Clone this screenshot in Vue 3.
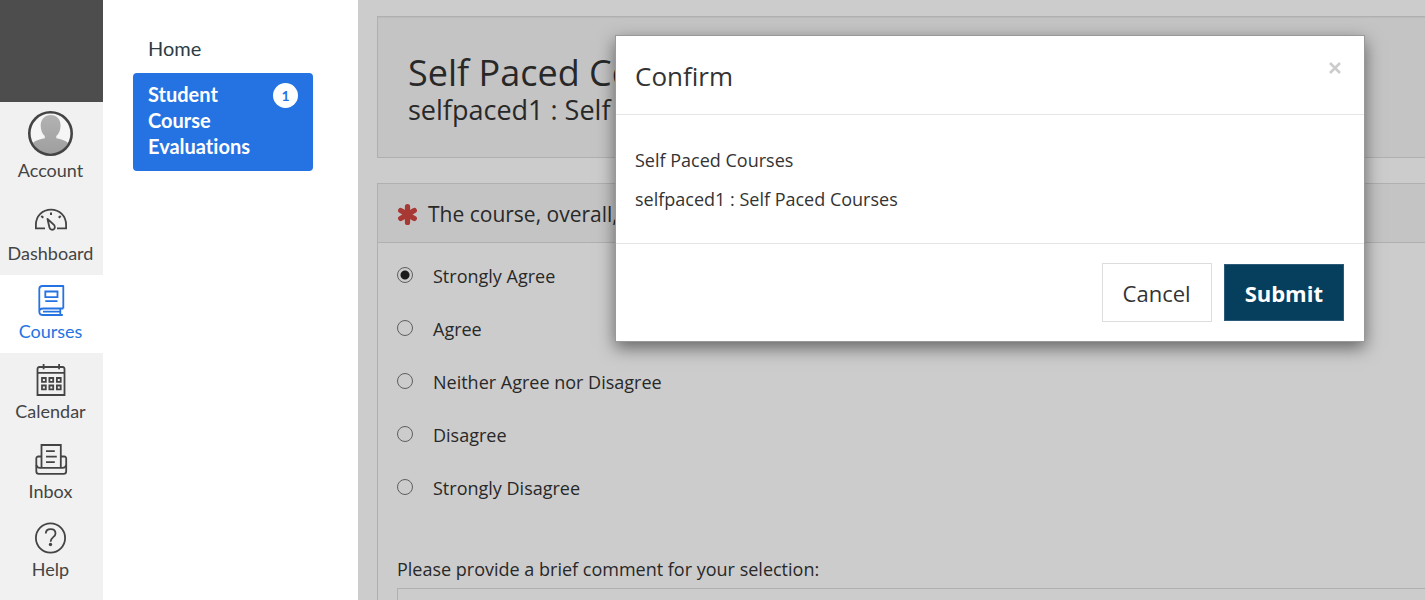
<script setup>
import { ref } from 'vue'

const answers = [
  'Strongly Agree',
  'Agree',
  'Neither Agree nor Disagree',
  'Disagree',
  'Strongly Disagree',
]
const selected = ref('Strongly Agree')
const comment = ref('')
</script>

<template>
  <div class="page">
    <nav class="global-nav" aria-label="Global navigation">
      <div class="brand"></div>
      <a class="nav-item" href="#account">
        <svg class="icon-account" viewBox="0 0 45 45" aria-hidden="true">
          <defs>
            <clipPath id="avatar-clip"><circle cx="22.5" cy="22.5" r="20" /></clipPath>
            <linearGradient id="avatar-shade" x1="0" y1="0" x2="0" y2="1">
              <stop offset="0" stop-color="#b2b2b2" />
              <stop offset="1" stop-color="#9e9e9e" />
            </linearGradient>
          </defs>
          <circle cx="22.5" cy="22.5" r="21" fill="#f5f5f5" />
          <g clip-path="url(#avatar-clip)" fill="url(#avatar-shade)">
            <path d="M22.8 4c6 0 9.800 4.300 9.800 10.500 0 4.500-1.800 8.500-4.300 10.500v2.200c2.700.8 9 1.200 12.700 5.800V45H4V33c3.700-4.600 10-5 12.800-5.800V25c-2.500-2-4.100-6-4.100-10.500C12.700 8.300 16.800 4 22.800 4z" />
          </g>
          <circle cx="22.500" cy="22.500" r="21.200" fill="none" stroke="#444" stroke-width="2.600" />
        </svg>
        <span>Account</span>
      </a>
      <a class="nav-item" href="#dashboard">
        <svg class="icon-dashboard" viewBox="0 0 34 38" fill="none" stroke="#444" stroke-width="1.800" aria-hidden="true">
          <path d="M11 27.300H1.900V24C1.900 15 8.500 8.700 17 8.700S32.100 15 32.100 24v3.300H23" />
          <path d="M13.500 18l6.500 5.800c1.400 1.800.9 4-.5 4.700-1.600.7-3.600 0-4.100-2.200z" stroke-linejoin="round" />
          <path d="M17 11.400v2.700M7.300 15l2 1.800M26.700 15l-2 1.800" stroke-width="2" />
        </svg>
        <span>Dashboard</span>
      </a>
      <a class="nav-item active" href="#courses" aria-current="page">
        <svg class="icon-courses" viewBox="0 0 34 33" fill="none" stroke="#2573e3" stroke-width="1.800" aria-hidden="true">
          <path d="M29.300 24.500V2H8.500C6.500 2 5.300 3.300 5.300 5.200v22.600M29.300 24.500H9.200c-2.300 0-3.900 1.200-3.900 3.200s1.500 3.300 3.900 3.300h19.600M26.300 24.500V31M9 27.700h17" stroke-linejoin="round" />
          <path d="M11.300 7.500h12.200v5.700H11.300zM11.300 17.200h12.200" />
        </svg>
        <span>Courses</span>
      </a>
      <a class="nav-item" href="#calendar">
        <svg class="icon-calendar" viewBox="0 0 34 35" fill="none" stroke="#444" stroke-width="1.800" aria-hidden="true">
          <path d="M9.700 5H5.500C4 5 3.500 5.800 3.500 7v26h27V7c0-1.200-.5-2-2-2h-3.200M9.700 5h15.600M3.500 10.900h27" />
          <path d="M9.600 2v5.300M25.100 2v5.300" />
          <path d="M8 16h3.800v3.800H8zM15.400 16h3.800v3.800h-3.800zM22.900 16h3.800v3.800h-3.800zM8 23.500h3.800v3.800H8zM15.400 23.500h3.800v3.800h-3.800zM22.900 23.500h3.800v3.800h-3.800z" />
        </svg>
        <span>Calendar</span>
      </a>
      <a class="nav-item" href="#inbox">
        <svg class="icon-inbox" viewBox="0 0 34 35" fill="none" stroke="#444" stroke-width="1.800" aria-hidden="true">
          <path d="M7.500 14.500H4.300c-1.300 0-2 .8-2 2v12.700c0 1.800.8 2.600 2.500 2.600h24.900c1.700 0 2.500-.8 2.500-2.600V16.500c0-1.200-.7-2-2-2H27" />
          <path d="M7.500 25.800V3h19.300v22.800" />
          <path d="M2.300 23c.5 2 1.700 2.900 3.700 2.900h22.400c2 0 3.300-.9 3.800-2.900" />
          <path d="M12 9.200h8.800M12 14.600h10.800M12 20.200h8.800" />
        </svg>
        <span>Inbox</span>
      </a>
      <a class="nav-item" href="#help">
        <svg class="icon-help" viewBox="0 0 34 33" fill="none" stroke="#444" stroke-width="1.800" aria-hidden="true">
          <circle cx="16.500" cy="16" r="14.600" />
          <path d="M11.800 11.600c0-2.600 1.900-4.500 4.800-4.500s4.900 1.700 4.900 4.300c0 3.900-4.900 3.700-4.900 8.300" />
          <circle cx="16.500" cy="22.500" r="1.700" fill="#444" stroke="none" />
        </svg>
        <span>Help</span>
      </a>
    </nav>

    <nav class="course-nav" aria-label="Course navigation">
      <a class="course-link" href="#home">Home</a>
      <a class="course-link current" href="#evaluations">
        <span class="course-label">Student Course Evaluations</span>
        <span class="badge">1</span>
      </a>
    </nav>

    <div class="stage">
      <main class="survey">
        <header class="well">
          <h1>Self Paced Courses</h1>
          <h2>selfpaced1 : Self</h2>
        </header>
        <section class="question">
          <div class="question-head">
            <svg class="required" viewBox="0 0 20 20" aria-label="Required">
              <path d="M10 2.500v15M3.500 6.200l13 7.600M16.500 6.200l-13 7.600" stroke="#d24641" stroke-width="5" stroke-linecap="round" fill="none" />
            </svg>
            <h3>The course, overall,</h3>
          </div>
          <div class="question-body">
            <label v-for="answer in answers" :key="answer" class="answer">
              <input v-model="selected" type="radio" name="overall" :value="answer" />
              <span>{{ answer }}</span>
            </label>
            <label class="comment-label" for="comment">Please provide a brief comment for your selection:</label>
            <textarea id="comment" v-model="comment" rows="4"></textarea>
          </div>
        </section>
      </main>
      <div class="backdrop"></div>
      <div class="modal" role="dialog" aria-modal="true" aria-labelledby="modal-title">
        <div class="modal-head">
          <h4 id="modal-title">Confirm</h4>
          <button class="close" type="button" aria-label="Close">
            <svg viewBox="0 0 14 14" aria-hidden="true">
              <path d="M2 2l10 10M12 2L2 12" stroke="#ccc" stroke-width="2.600" />
            </svg>
          </button>
        </div>
        <div class="modal-body">
          <p>Self Paced Courses</p>
          <p>selfpaced1 : Self Paced Courses</p>
        </div>
        <div class="modal-foot">
          <button class="btn" type="button">Cancel</button>
          <button class="btn primary" type="button">Submit</button>
        </div>
      </div>
    </div>
  </div>
</template>

<style>
body {
  margin: 0;
  overflow: hidden;
}
</style>

<style scoped>
* {
  box-sizing: border-box;
}
h1, h2, h3, h4, p {
  margin: 0;
  font-weight: 400;
}
.page {
  display: flex;
  height: 100vh;
  overflow: hidden;
  background: #fff;
  font-family: "Open Sans", "Noto Sans", sans-serif;
  font-variant-ligatures: none;
  color: #333;
}
.global-nav {
  flex: 0 0 103px;
  background: #f1f1f1;
  font-family: Lato, sans-serif;
}
.brand {
  height: 102px;
  background: #4d4d4d;
}
.nav-item {
  display: flex;
  flex-direction: column;
  align-items: center;
  gap: 3px;
  padding: 9px 2px 11px 0;
  color: #444;
  font-size: 18px;
  line-height: 22px;
  text-decoration: none;
}
.nav-item.active {
  background: #fff;
  color: #2573e3;
}
.nav-item svg {
  width: 34px;
}
.nav-item .icon-account {
  width: 45px;
  height: 45px;
}
.icon-dashboard {
  height: 38px;
}
.icon-courses, .icon-help {
  height: 33px;
}
.icon-calendar, .icon-inbox {
  height: 35px;
}
.course-nav {
  flex: 0 0 255px;
  padding: 28px 45px 0 30px;
  font-family: Lato, sans-serif;
}
.course-link {
  display: flex;
  justify-content: space-between;
  align-items: flex-start;
  padding: 7px 15px 12px;
  color: #2d3b45;
  font-size: 20px;
  line-height: 26px;
  text-decoration: none;
}
.course-link.current {
  padding-top: 8px;
  border-radius: 4px;
  background: #2573e3;
  color: #fff;
  font-weight: 700;
}
.badge {
  flex: none;
  width: 25px;
  margin-top: 2px;
  border-radius: 50%;
  background: #fff;
  color: #2573e3;
  font-size: 14px;
  line-height: 25px;
  text-align: center;
}
.stage {
  position: relative;
  flex: 1;
  min-width: 0;
  overflow: hidden;
}
.survey {
  padding: 16px 0 0 19px;
}
.well {
  padding: 34px 30px 32px;
  border: 1px solid #ddd;
  border-right: 0;
  background: #f5f5f5;
  box-shadow: inset 0 1px 1px rgba(0, 0, 0, 0.05);
}
h1 {
  font-size: 36px;
  line-height: 44px;
  white-space: nowrap;
}
h2 {
  font-size: 27px;
  line-height: 30px;
  white-space: nowrap;
}
.question {
  margin-top: 25px;
  border: 1px solid #ddd;
  border-right: 0;
}
.question-head {
  display: flex;
  align-items: center;
  gap: 10px;
  padding: 15px 19px 13px;
  border-bottom: 1px solid #ddd;
  background: #f5f5f5;
}
.required {
  width: 21px;
  height: 21px;
}
h3 {
  font-size: 21px;
  line-height: 30px;
  white-space: nowrap;
}
.question-body {
  display: flex;
  flex-direction: column;
  padding: 20px 0 0 19px;
  font-size: 18px;
  line-height: 26px;
}
.answer {
  display: flex;
  align-items: flex-start;
  gap: 20px;
  margin-bottom: 27px;
}
.answer input {
  appearance: none;
  width: 16px;
  height: 16px;
  margin: 4px 0 0;
  border: 1px solid #777;
  border-radius: 50%;
  background: #fff;
}
.answer input:checked {
  background: radial-gradient(circle, #222 0 4px, #fff 5px);
}
.comment-label {
  margin-top: 28px;
}
textarea {
  height: 100px;
  margin-top: 6px;
  border: 1px solid #ddd;
  border-right: 0;
  background: #fff;
  resize: none;
}
.backdrop {
  position: absolute;
  inset: 0;
  background: rgba(0, 0, 0, 0.2);
}
.modal {
  position: absolute;
  top: 35px;
  right: 60px;
  width: 750px;
  max-width: calc(100% - 80px);
  border: 1px solid #999;
  background: #fff;
  box-shadow: 0 6px 16px rgba(0, 0, 0, 0.5);
}
.modal-head {
  display: flex;
  justify-content: space-between;
  align-items: flex-start;
  padding: 22px 19px 20px;
  border-bottom: 1px solid #e5e5e5;
}
h4 {
  font-size: 26px;
  line-height: 36px;
}
.close {
  display: flex;
  padding: 3px;
  border: 0;
  background: none;
}
.close svg {
  width: 14px;
  height: 14px;
}
.modal-body {
  display: flex;
  flex-direction: column;
  gap: 13px;
  padding: 32px 19px 31px;
  font-size: 18px;
  line-height: 26px;
}
.modal-foot {
  display: flex;
  justify-content: flex-end;
  align-items: center;
  gap: 12px;
  padding: 19px 20px;
  border-top: 1px solid #e5e5e5;
}
.btn {
  padding: 14px 20px 12px;
  border: 1px solid #ddd;
  background: #fff;
  color: #333;
  font-family: inherit;
  font-size: 22px;
  line-height: 31px;
}
.btn.primary {
  padding: 13px 20px 11px;
  border-color: #2b5b78;
  background: #063e5e;
  color: #fff;
  font-weight: 700;
}
</style>
